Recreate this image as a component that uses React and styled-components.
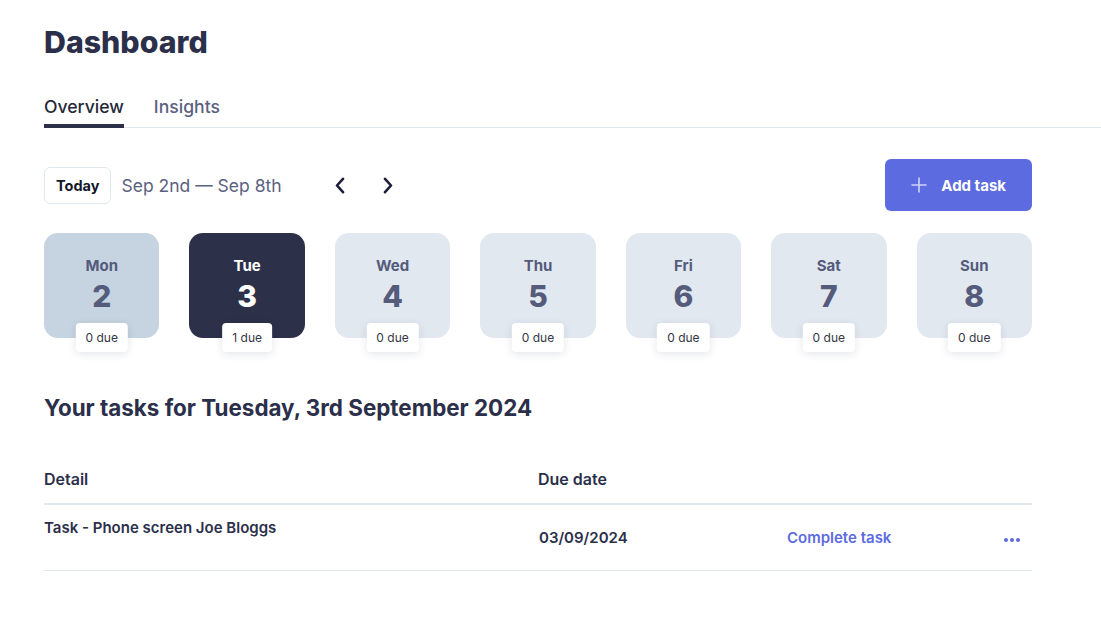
import React from 'react';
import styled, { createGlobalStyle } from 'styled-components';

const GlobalStyle = createGlobalStyle`
  body {
    margin: 0;
    background: #ffffff;
    font-family: Inter, "Noto Sans", sans-serif;
    color: #2b2f4a;
  }
`;

const Page = styled.div`
  padding: 24px 0 40px 44px;
`;

const Title = styled.h1`
  margin: 0;
  font-size: 30.3px;
  line-height: 36px;
  font-weight: 800;
  color: #2b2f4a;
`;

const TabList = styled.div`
  display: flex;
  gap: 30px;
  margin-top: 35px;
  border-bottom: 1px solid #e2e8f0;
`;

const Tab = styled.div`
  font-size: 17.6px;
  line-height: 24px;
  font-weight: 500;
  padding-bottom: 5px;
  color: ${p => (p.$active ? '#252839' : '#5b6180')};
  border-bottom: 4px solid ${p => (p.$active ? '#2b2f4a' : 'transparent')};
  margin-bottom: -1px;
`;

const Content = styled.div`
  width: 988px;
`;

const Toolbar = styled.div`
  display: flex;
  align-items: center;
  justify-content: space-between;
  margin-top: 31px;
`;

const LeftGroup = styled.div`
  display: flex;
  align-items: center;
`;

const TodayButton = styled.button`
  height: 37px;
  padding: 0 11px 0 11px;
  min-width: 67px;
  border: 1px solid #e2e8f0;
  border-radius: 6px;
  background: #fff;
  font-family: inherit;
  font-size: 14.5px;
  font-weight: 700;
  color: #14172a;
`;

const RangeText = styled.span`
  margin-left: 10px;
  font-size: 17.5px;
  color: #5b6180;
`;

const NavGroup = styled.div`
  display: flex;
  gap: 16px;
  margin-left: 42px;
`;

const NavButton = styled.button`
  width: 32px;
  height: 32px;
  display: flex;
  align-items: center;
  justify-content: center;
  border: none;
  background: none;
  padding: 0;
  color: #1b1d3a;
`;

const AddButton = styled.button`
  display: flex;
  align-items: center;
  gap: 14px;
  height: 52px;
  padding: 0 26px;
  border: none;
  border-radius: 6px;
  background: #5d6be0;
  color: #fff;
  font-family: inherit;
  font-size: 15px;
  font-weight: 700;
`;

const DayRow = styled.div`
  display: flex;
  gap: 30px;
  margin-top: 22px;
`;

const DayCard = styled.div`
  position: relative;
  flex: 1;
  height: 105px;
  box-sizing: border-box;
  padding-top: 24px;
  border-radius: 14px;
  text-align: center;
  background: ${p => (p.$active ? '#2c3049' : p.$past ? '#c6d3e0' : '#e2e8f0')};
  color: ${p => (p.$active ? '#ffffff' : '#555b7b')};
`;

const DayName = styled.div`
  font-size: 15px;
  line-height: 18px;
  font-weight: 700;
`;

const DayNumber = styled.div`
  margin-top: 5px;
  font-size: 30px;
  line-height: 32px;
  font-weight: 800;
`;

const DueBadge = styled.div`
  position: absolute;
  left: 50%;
  bottom: -14px;
  transform: translateX(-50%);
  height: 29px;
  padding: 0 10px;
  display: flex;
  align-items: center;
  background: #fff;
  border-radius: 4px;
  box-shadow: 0 2px 8px rgba(30, 40, 70, 0.12);
  font-size: 12px;
  color: #333645;
  white-space: nowrap;
`;

const TasksHeading = styled.h2`
  margin: 56px 0 0;
  font-size: 22.4px;
  line-height: 28px;
  font-weight: 700;
  color: #2b2f4a;
`;

const Table = styled.table`
  width: 100%;
  margin-top: 31px;
  border-collapse: collapse;
`;

const HeadCell = styled.th`
  padding: 16px 0 14px;
  text-align: left;
  font-size: 16px;
  line-height: 20px;
  font-weight: 600;
  color: #2b2f4a;
  border-bottom: 2px solid #e2e8f0;
  width: ${p => p.$w || 'auto'};
`;

const Row = styled.tr`
  border-bottom: 1px solid #e2e8f0;
`;

const TaskCell = styled.td`
  padding: 13px 0 32px;
  vertical-align: top;
  font-size: 15px;
  line-height: 20px;
  font-weight: 600;
  color: #2b2f4a;
`;

const Cell = styled.td`
  vertical-align: middle;
  font-size: 15px;
  line-height: 20px;
  font-weight: 600;
  color: ${p => (p.$link ? '#5d6be0' : '#2b2f4a')};
  text-align: ${p => p.$align || 'left'};
  padding-right: ${p => p.$pr || '0'};
`;

const Chevron = ({ dir }) => (
  <svg width="12" height="17" viewBox="0 0 12 17" fill="none">
    <path
      d={dir === 'left' ? 'M9 1.8 3 8.5l6 6.7' : 'M3 1.8 9 8.5l-6 6.7'}
      stroke="currentColor"
      strokeWidth="2.6"
      strokeLinecap="round"
      strokeLinejoin="round"
    />
  </svg>
);

const Plus = () => (
  <svg width="16" height="16" viewBox="0 0 16 16" fill="none">
    <path d="M8 1v14M1 8h14" stroke="rgba(255,255,255,0.7)" strokeWidth="1.6" strokeLinecap="round" />
  </svg>
);

const Dots = () => (
  <svg width="18" height="6" viewBox="0 0 18 6" fill="#5d6be0">
    <circle cx="3" cy="3" r="2" />
    <circle cx="9" cy="3" r="2" />
    <circle cx="15" cy="3" r="2" />
  </svg>
);

const days = [
  { name: 'Mon', num: 2, due: 0, past: true },
  { name: 'Tue', num: 3, due: 1, active: true },
  { name: 'Wed', num: 4, due: 0 },
  { name: 'Thu', num: 5, due: 0 },
  { name: 'Fri', num: 6, due: 0 },
  { name: 'Sat', num: 7, due: 0 },
  { name: 'Sun', num: 8, due: 0 },
];

const tasks = [
  { id: 1, detail: 'Task - Phone screen Joe Bloggs', due: '03/09/2024' },
];

const App = () => (
  <>
    <GlobalStyle />
    <Page>
      <Title>Dashboard</Title>
      <TabList>
        <Tab $active>Overview</Tab>
        <Tab>Insights</Tab>
      </TabList>

      <Content>
        <Toolbar>
          <LeftGroup>
            <TodayButton>Today</TodayButton>
            <RangeText>Sep 2nd — Sep 8th</RangeText>
            <NavGroup>
              <NavButton><Chevron dir="left" /></NavButton>
              <NavButton><Chevron dir="right" /></NavButton>
            </NavGroup>
          </LeftGroup>
          <AddButton>
            <Plus />
            Add task
          </AddButton>
        </Toolbar>

        <DayRow>
          {days.map(d => (
            <DayCard key={d.name} $active={d.active} $past={d.past}>
              <DayName>{d.name}</DayName>
              <DayNumber>{d.num}</DayNumber>
              <DueBadge>{d.due} due</DueBadge>
            </DayCard>
          ))}
        </DayRow>

        <TasksHeading>Your tasks for Tuesday, 3rd September 2024</TasksHeading>

        <Table>
          <thead>
            <tr>
              <HeadCell $w="494px">Detail</HeadCell>
              <HeadCell $w="248px">Due date</HeadCell>
              <HeadCell />
              <HeadCell $w="60px" />
            </tr>
          </thead>
          <tbody>
            {tasks.map(t => (
              <Row key={t.id}>
                <TaskCell>{t.detail}</TaskCell>
                <Cell>{t.due}</Cell>
                <Cell $link>Complete task</Cell>
                <Cell $align="right" $pr="11px"><Dots /></Cell>
              </Row>
            ))}
          </tbody>
        </Table>
      </Content>
    </Page>
  </>
);

export default App;
